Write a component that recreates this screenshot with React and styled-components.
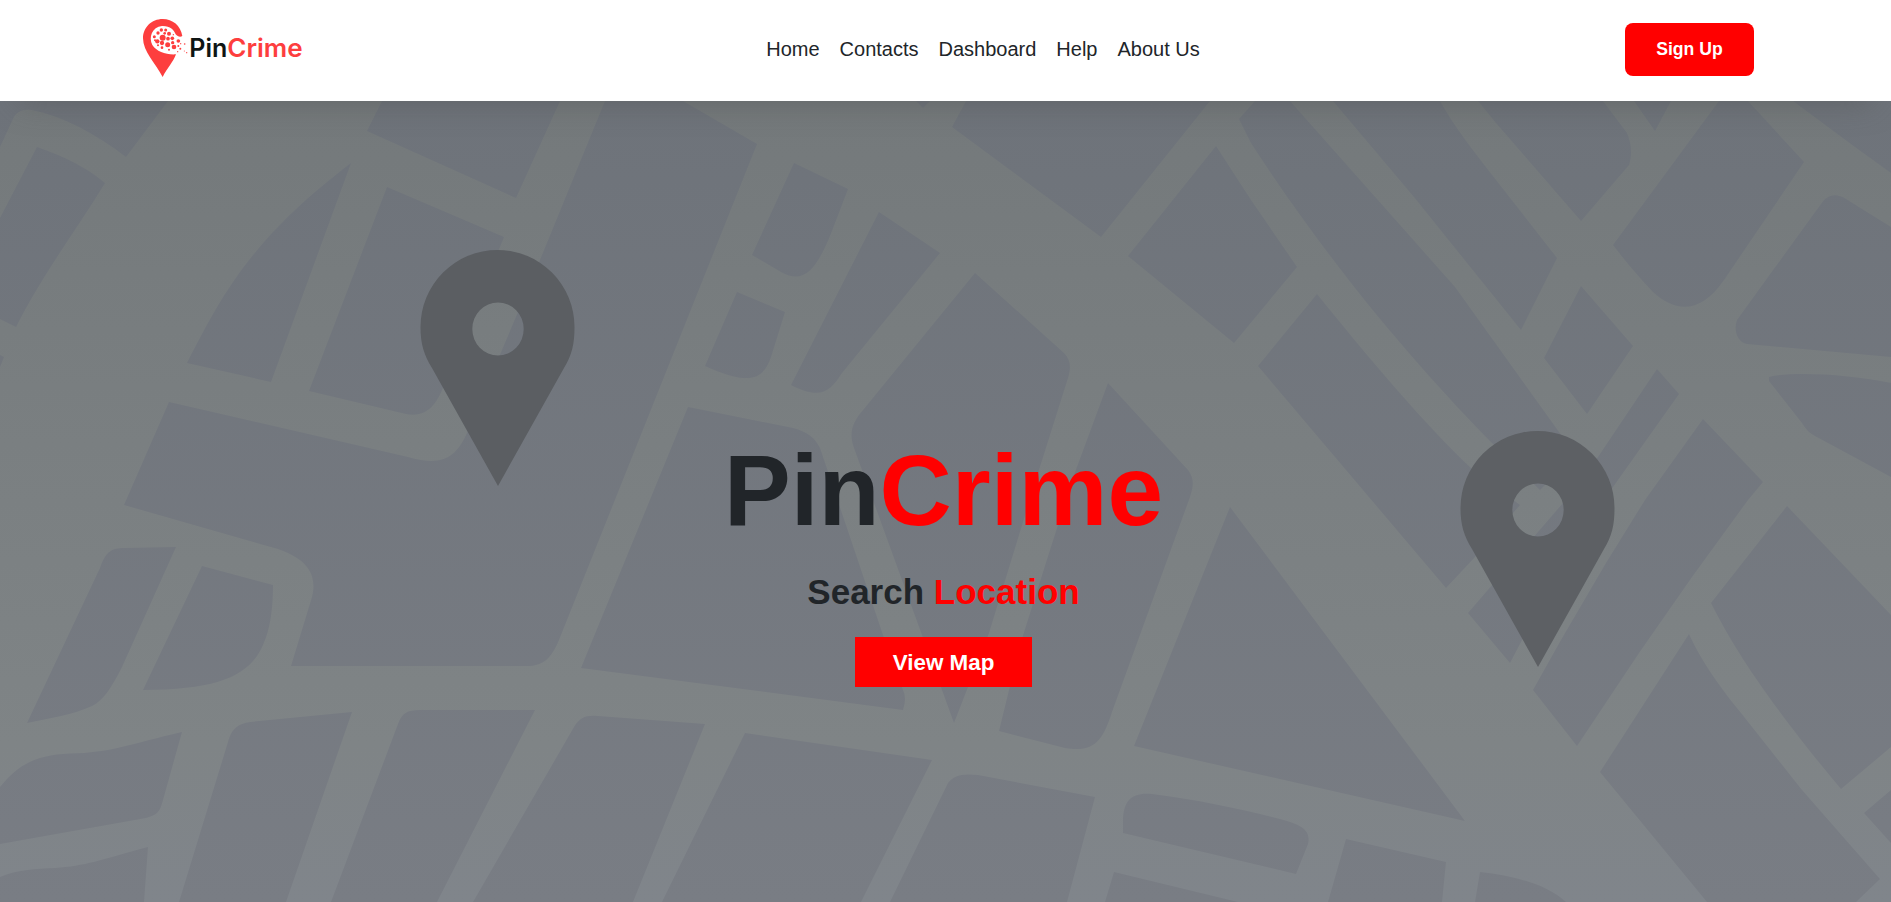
import React from "react";
import styled, { createGlobalStyle } from "styled-components";

const GlobalStyle = createGlobalStyle`
  *, *::before, *::after { box-sizing: border-box; }
  body {
    margin: 0;
    color: #212529;
    font-family: "Liberation Sans", Arial, sans-serif;
    overflow: hidden;
  }
`;

const Page = styled.div`
  display: flex;
  flex-direction: column;
  height: 100vh;
`;

const Header = styled.header`
  position: relative;
  z-index: 1;
  display: flex;
  justify-content: space-between;
  align-items: center;
  height: 101px;
  padding: 0 137px 3px 143px;
  background: #fff;
  box-shadow: 0 20px 30px -20px rgba(80, 80, 80, 0.5);
`;

const LogoLink = styled.a`
  display: block;
  width: 198px;
  height: 62px;
  svg { display: block; }
`;

const Nav = styled.nav`
  display: flex;
  gap: 20px;
`;

const NavLink = styled.a`
  color: #212529;
  font-size: 20px;
  line-height: 24px;
  text-decoration: none;
`;

const SignUp = styled.button`
  width: 129px;
  height: 53px;
  padding: 0;
  border: 0;
  border-radius: 8px;
  background: #f00;
  color: #fff;
  font: bold 17.6px "Liberation Sans", Arial, sans-serif;
`;

const Hero = styled.main`
  position: relative;
  flex: 1;
  display: flex;
  flex-direction: column;
  align-items: center;
  padding: 329px 4px 0 0;
`;

const MapArt = styled.svg`
  position: absolute;
  inset: 0;
  width: 100%;
  height: 100%;
`;

const Title = styled.h1`
  position: relative;
  margin: 0;
  font-size: 100px;
  line-height: 120px;
`;

const Subtitle = styled.h2`
  position: relative;
  margin: 21px 0 0;
  font-size: 35px;
  line-height: 42px;
`;

const Accent = styled.span`
  color: #f00;
`;

const ViewMap = styled.button`
  position: relative;
  width: 177px;
  height: 50px;
  margin-top: 24px;
  padding: 1px 0 0;
  border: 0;
  background: #f00;
  color: #fff;
  font: bold 22.4px "Liberation Sans", Arial, sans-serif;
`;

const blocks = [
  "M0 101H168L126 157C95 133 62 116 32 110C22 109 16 112 13 119L0 147Z",
  "M37 147C65 157 86 167 105 183C78 228 45 270 16 327L0 319V218Z",
  "M0 355L4 357L0 367Z",
  "M351 163L271 382L187 363C222 295 250 240 351 163Z",
  "M382 101L367 131L516 198L560 101Z",
  "M387 187L504 237L445 382C438 403 428 418 406 414L309 391Z",
  "M605 101H683L757 144L559 640C551 659 543 666 527 666H291L312 597C317 577 310 560 278 549L124 505L169 402L408 457C440 466 455 460 467 433L540 260Z",
  "M176 547L122 667C112 687 103 701 92 706C73 715 50 718 27 723L100 568C106 551 112 548 124 548Z",
  "M202 566L273 585C273 605 271 628 263 645C250 675 220 690 143 690Z",
  "M182 732L163 800C160 812 157 815 146 818L0 844V787C18 765 35 755 70 753.5C110 753 130 744 182 732Z",
  "M148 847L144 902H0V877C20 869 35 869 55 868C85 866 100 860 148 847Z",
  "M352 712L286 902H179L228 742C232 728 238 724 250 722Z",
  "M535 710L437 902H331L398 724C402 713 407 710 420 710Z",
  "M705 724L633 902H473L574 727C580 717 586 715 598 716Z",
  "M745 733L932 760L861 902H662Z",
  "M1095 797L1067 902H890L948 783C953 776 961 773 978 775Z",
  "M1123 833V822C1123 800 1132 792 1152 794C1200 800 1240 809 1280 819C1303 825 1311 831 1308 844L1296 874Z",
  "M1114 872L1105 902H1238Z",
  "M1346 839L1446 862L1442 902H1328Z",
  "M1480 872C1515 876 1546 884 1566 902H1475Z",
  "M1230 507L1465 821L1134 746Z",
  "M1108 383L1188 470C1194 478 1194 485 1190 497L1112 712C1103 740 1095 753 1065 748L999 731L1020 645L1050 550L1074 475Z",
  "M975 273L1064 353C1071 360 1071 368 1068 378L1038 473L989 633L954 723L922 635L854 448C849 434 852 425 859 415Z",
  "M688 407L793 428C808 432 815 438 820 448L883 635L903 690Q907 698 903 710L581 668Z",
  "M794 163L848 189L830 236C815 272 803 284 781 272L752 255Z",
  "M737 292L785 312L771 357C763 380 750 386 705 366Z",
  "M879 212L940 253L842 373C830 392 820 400 791 385Z",
  "M966 101L952 127L1101 237L1210 101Z",
  "M916 101L923 108L930 101Z",
  "M1216 146L1128 256L1234 343L1297 267L1251 200Z",
  "M1239 119L1255 101H1290L1455 287L1559 432L1575 455L1540 490L1492 443C1430 380 1340 280 1251 143Z",
  "M1317 294L1258 366L1446 588L1475 557L1520 505L1471 468C1430 430 1370 360 1317 294Z",
  "M1657 369L1679 394L1613 487L1522 640L1510 663L1468 613L1563 503L1598 457Z",
  "M1703 419L1763 482L1748 500L1692 577L1639 653L1577 746L1533 690L1561 640L1606 563L1645 500Z",
  "M1787 506L1891 615V747L1841 789C1769 703 1733 647 1711 603Z",
  "M1689 634C1700 658 1715 681 1741 713L1802 790L1880 879L1856 902H1707L1600 772Z",
  "M1891 790L1864 813L1891 843Z",
  "M1581 286L1633 346L1587 414L1544 358Z",
  "M1333 101H1440C1455 128 1475 153 1496 180L1557 258L1521 330L1414 197Z",
  "M1478 101H1603L1627 133C1632 145 1632 156 1629 165L1581 221L1496 123Z",
  "M1634 101L1655 131L1671 101Z",
  "M1719 101H1748L1804 162L1724 280C1700 315 1675 312 1653 292C1638 276 1626 262 1613 245Z",
  "M1793 101H1891V173L1855 147Z",
  "M1891 227L1846 199C1836 193 1828 194 1821 204L1737 320C1733 331 1738 343 1747 344L1891 357Z",
  "M1891 383C1850 374 1790 371 1769 377V381L1802 423C1806 429 1809 433 1815 436L1891 477Z",
];

const pinShape =
  "M498 486L432 368C424 355 420.500 344 420.500 327A77 77 0 0 1 574.500 327C574.500 344 572 355 564 368ZM498 302.500A25.700 26.500 0 1 0 498 355.500A25.700 26.500 0 1 0 498 302.500Z";

const logoDots = [
  [98, 113, 9], [94, 90, 5], [107, 90, 4.5], [84, 99, 5], [73, 110, 4.5],
  [117, 101, 6], [104, 100, 4], [82, 124, 6.5], [75, 121, 3], [114, 116, 5.5],
  [96, 129, 6.5], [127, 115, 5.5], [113, 134, 7.5], [128, 128, 5], [96, 143, 4],
  [132, 141, 7], [145, 123, 5.5], [145, 138, 3], [152, 131, 2], [164, 132, 2.5],
  [130, 104, 2], [151, 146, 3], [143, 155, 2], [170, 158, 2],
  [163, 153, 1.5], [117, 149, 3], [84, 136, 3],
];

function Logo() {
  return (
    <svg width="162" height="60" viewBox="39 54 486 180">
      <path
        fill="#fd3e3e"
        d="M157 108C152 77 128 57 98 57C65 57 39 82 39 115C39 154 77 191 98 231C112 203 130 186 138 163C109 165 80 155 67 135C55 112 66 81 96 78C120 77 132 90 137 103C143 111 152 112 157 108Z"
      />
      {logoDots.map(([x, y, r]) => (
        <circle key={`${x}-${y}`} cx={x} cy={y} r={r} fill="#fd3e3e" />
      ))}
      <g fontFamily="Inter, sans-serif" fontWeight="600" fontSize="77">
        <text x="178" y="172" textLength="114" lengthAdjust="spacingAndGlyphs" fill="#0f1513">Pin</text>
        <text x="292" y="172" textLength="226" lengthAdjust="spacingAndGlyphs" fill="#fd3e3e">Crime</text>
      </g>
    </svg>
  );
}

function MapBackground() {
  return (
    <MapArt viewBox="0 101 1891 801" preserveAspectRatio="none" aria-hidden="true">
      <defs>
        <linearGradient id="road" x1="0" y1="0" x2="0" y2="1">
          <stop offset="0" stopColor="#74797b" />
          <stop offset="0.5" stopColor="#7b8082" />
          <stop offset="0.8" stopColor="#7f8486" />
          <stop offset="1" stopColor="#80858b" />
        </linearGradient>
        <linearGradient id="block" gradientUnits="userSpaceOnUse" x1="0" y1="101" x2="0" y2="902">
          <stop offset="0" stopColor="#6e737a" />
          <stop offset="1" stopColor="#797d84" />
        </linearGradient>
      </defs>
      <rect y="101" width="1891" height="801" fill="url(#road)" />
      <path d={blocks.join("")} fill="url(#block)" />
      <path d={pinShape} fill="#5b5e62" fillRule="evenodd" />
      <path d={pinShape} fill="#5d6064" fillRule="evenodd" transform="translate(1040 181)" />
    </MapArt>
  );
}

export default function App() {
  return (
    <Page>
      <GlobalStyle />
      <Header>
        <LogoLink><Logo /></LogoLink>
        <Nav>
          {["Home", "Contacts", "Dashboard", "Help", "About Us"].map((label) => (
            <NavLink key={label}>{label}</NavLink>
          ))}
        </Nav>
        <SignUp>Sign Up</SignUp>
      </Header>
      <Hero>
        <MapBackground />
        <Title>Pin<Accent>Crime</Accent></Title>
        <Subtitle>Search <Accent>Location</Accent></Subtitle>
        <ViewMap>View Map</ViewMap>
      </Hero>
    </Page>
  );
}
